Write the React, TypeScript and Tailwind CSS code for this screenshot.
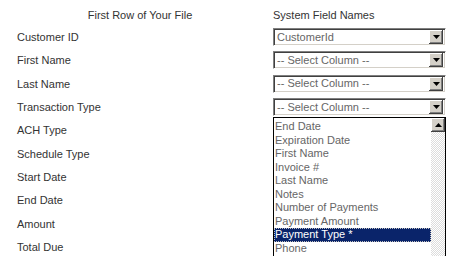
import React from 'react';

const fileColumns = [
  'Customer ID',
  'First Name',
  'Last Name',
  'Transaction Type',
  'ACH Type',
  'Schedule Type',
  'Start Date',
  'End Date',
  'Amount',
  'Total Due'
];

const selected: Record<number, string> = {
  0: 'CustomerId',
  1: '-- Select Column --',
  2: '-- Select Column --',
  3: '-- Select Column --'
};

const options = [
  'End Date',
  'Expiration Date',
  'First Name',
  'Invoice #',
  'Last Name',
  'Notes',
  'Number of Payments',
  'Payment Amount',
  'Payment Type *',
  'Phone'
];

const Arrow: React.FC<{ up?: boolean }> = ({ up }) => (
  <svg width="7" height="4" viewBox="0 0 7 4" className="block">
    {up ? <path d="M3.5 0 L7 4 L0 4 Z" fill="#000" /> : <path d="M0 0 L7 0 L3.5 4 Z" fill="#000" />}
  </svg>
);

const ArrowButton: React.FC<{ up?: boolean }> = ({ up }) => (
  <div className="w-[14px] h-[14px] bg-[#d4d0c8] flex items-center justify-center shadow-[inset_-1px_-1px_0_#404040,inset_1px_1px_0_#ffffff,inset_-2px_-2px_0_#808080]">
    <Arrow up={up} />
  </div>
);

const FakeSelect: React.FC<{ value: string; open?: boolean }> = ({ value, open }) => (
  <div className="relative w-[173px]">
    <div className="h-[18px] flex items-center bg-white border border-t-[#808080] border-l-[#808080] border-b-white border-r-white shadow-[inset_1px_1px_0_#404040,inset_-1px_-1px_0_#d4d0c8] pl-[3px] pr-[2px]">
      <span className="flex-1 text-[11px] text-[#666] leading-none truncate">{value}</span>
      <ArrowButton />
    </div>
    {open && (
      <div className="absolute left-0 top-full mt-px w-[173px] h-[139px] bg-white border border-b-0 border-black flex">
        <div className="flex-1 pt-[2px]">
          {options.map((opt, idx) => (
            <div
              key={opt}
              className={
                idx === 8
                  ? 'h-[13.5px] pl-px text-[11px] leading-[13.5px] bg-[#0a246a] text-white outline-1 outline-dotted outline-[#c0c0c0] -outline-offset-1'
                  : 'h-[13.5px] pl-px text-[11px] leading-[13.5px] text-[#666]'
              }
            >
              {opt}
            </div>
          ))}
        </div>
        <div className="w-[14px] flex flex-col bg-[repeating-conic-gradient(#ffffff_0_25%,#dcdcdc_0_50%)] bg-[length:2px_2px]">
          <ArrowButton up />
        </div>
      </div>
    )}
  </div>
);

export default function App() {
  return (
    <div className="w-[463px] h-[265px] overflow-hidden bg-white font-['Liberation_Sans',Arial,sans-serif] text-[11px] text-[#333]">
      <div className="flex h-[25.5px] items-end pb-[2px]">
        <div className="w-[273px] pl-[7px] text-center">First Row of Your File</div>
        <div className="flex-1">System Field Names</div>
      </div>
      {fileColumns.map((label, idx) => (
        <div key={label} className="flex h-[23.33px] items-center">
          <div className="w-[273px] pl-[17px]">{label}</div>
          <div className="flex-1">
            {selected[idx] !== undefined && <FakeSelect value={selected[idx]} open={idx === 3} />}
          </div>
        </div>
      ))}
    </div>
  );
}
